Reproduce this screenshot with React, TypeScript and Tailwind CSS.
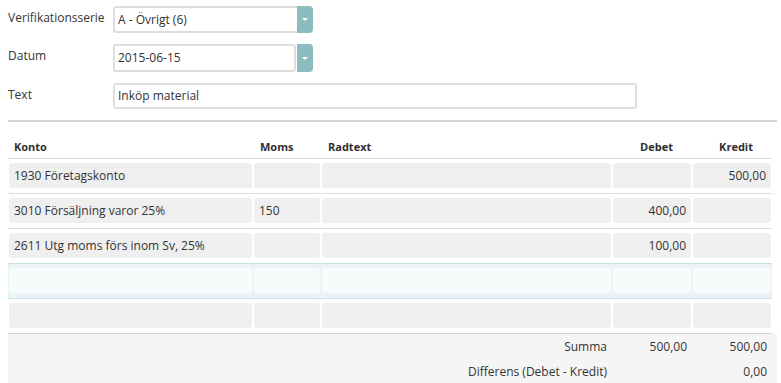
import { ReactNode } from 'react'

type Row = {
  konto: string
  moms: string
  radtext: string
  debet: string
  kredit: string
}

const rows: Row[] = [
  { konto: '1930 Företagskonto', moms: '', radtext: '', debet: '', kredit: '500,00' },
  { konto: '3010 Försäljning varor 25%', moms: '150', radtext: '', debet: '400,00', kredit: '' },
  { konto: '2611 Utg moms förs inom Sv, 25%', moms: '', radtext: '', debet: '100,00', kredit: '' },
]

const cols = 'grid grid-cols-[245px_68px_291px_80px_80px]'

const SelectBox = ({ value, joined }: { value: string; joined?: boolean }) => (
  <div className="flex w-[200px]">
    <div
      className={
        'flex-1 flex items-center pl-[3px] bg-white border-2 border-[#dedede] rounded-l-[3px] ' +
        (joined ? 'border-r-0' : 'rounded-r-[3px] mr-[1px]')
      }
    >
      {value}
    </div>
    <div className="w-[16px] bg-[#8dbcc0] rounded-r-[4px] flex items-center justify-center">
      <div className="w-0 h-0 border-l-[3px] border-r-[3px] border-t-[3px] border-l-transparent border-r-transparent border-t-white" />
    </div>
  </div>
)

const FormRow = ({ label, children, className }: { label: string; children: ReactNode; className?: string }) => (
  <div className={'flex ' + (className ?? '')}>
    <div className="w-[105px] pt-[4px] leading-[16px]">{label}</div>
    {children}
  </div>
)

const Cell = ({ children, right, light }: { children?: ReactNode; right?: boolean; light?: boolean }) => (
  <div className="px-[1px]">
    <div
      className={
        'h-[25px] leading-[25px] rounded-[3px] px-[5px] whitespace-nowrap overflow-hidden ' +
        (light ? 'bg-[#f8fbfb] ' : 'bg-[#efefef] ') +
        (right ? 'text-right' : '')
      }
    >
      {children}
    </div>
  </div>
)

export default function App() {
  return (
    <div className="w-[781px] h-[383px] overflow-hidden bg-white text-[12px] text-[#333] font-['Open_Sans',sans-serif]">
      <div className="pl-2 pt-[6px]">
        <FormRow label="Verifikationsserie" className="h-[27px]">
          <SelectBox value="A - Övrigt (6)" joined />
        </FormRow>
        <FormRow label="Datum" className="h-[28px] mt-[11px]">
          <SelectBox value="2015-06-15" />
        </FormRow>
        <FormRow label="Text" className="h-[26px] mt-[11px]">
          <div className="w-[524px] flex items-center pl-[3px] border-2 border-[#dedede] rounded-[3px]">
            Inköp material
          </div>
        </FormRow>
      </div>

      <div className="ml-2 w-[769px] mt-[11px]">
        <div className="h-[2px] bg-[#d5d5d5]" />

        <div className="w-[764px]">
          <div className={cols + ' h-[37px] items-end pb-[4px] border-b border-[#dddddd] text-[11px] leading-[15px] font-bold text-[#2f2f2f]'}>
            <div className="pl-[6px]">Konto</div>
            <div className="pl-[7px]">Moms</div>
            <div className="pl-[7px]">Radtext</div>
            <div className="text-right pr-[19px]">Debet</div>
            <div className="text-right pr-[19px]">Kredit</div>
          </div>

          {rows.map((r, i) => (
            <div
              key={i}
              className={
                cols +
                ' pt-[4px] pb-[5px] border-b ' +
                (i === rows.length - 1 ? 'border-[#c9e1e6]' : 'border-[#dddddd]')
              }
            >
              <Cell>{r.konto}</Cell>
              <Cell>{r.moms}</Cell>
              <Cell>{r.radtext}</Cell>
              <Cell right>{r.debet}</Cell>
              <Cell right>{r.kredit}</Cell>
            </div>
          ))}

          {/* active empty row */}
          <div className={cols + ' pt-[4px] pb-[5px] border-b border-[#c9e1e6] bg-[#eaf4f7]'}>
            <Cell light />
            <Cell light />
            <Cell light />
            <Cell light />
            <Cell light />
          </div>

          <div className={cols + ' pt-[4px] pb-[5px] border-b border-[#d5d5d5]'}>
            <Cell />
            <Cell />
            <Cell />
            <Cell />
            <Cell />
          </div>
        </div>

        <div className="bg-[#f5f5f5] h-[60px]">
          <div className={cols + ' h-[25px] leading-[25px]'}>
            <div className="col-span-3 text-right pr-[5px]">Summa</div>
            <div className="text-right pr-[5px]">500,00</div>
            <div className="text-right pr-[5px]">500,00</div>
          </div>
          <div className={cols + ' h-[25px] leading-[25px]'}>
            <div className="col-span-3 text-right pr-[5px]">Differens (Debet - Kredit)</div>
            <div />
            <div className="text-right pr-[5px]">0,00</div>
          </div>
        </div>
      </div>
    </div>
  )
}
